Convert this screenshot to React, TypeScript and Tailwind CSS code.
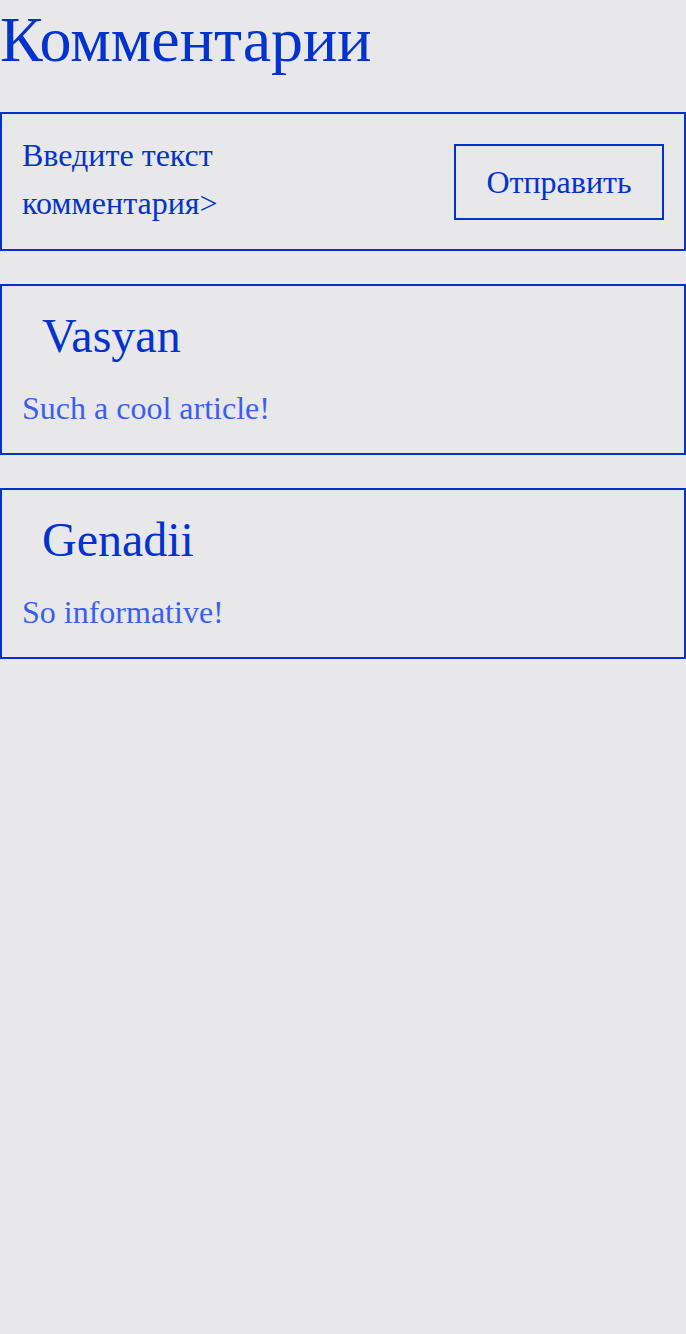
import React from "react";

const comments = [
  { name: "Vasyan", text: "Such a cool article!" },
  { name: "Genadii", text: "So informative!" },
];

export default function App() {
  return (
    <div className="min-h-[1334px] w-full bg-[#e8e8ea] text-[#0033cc]" style={{ fontFamily: '"Liberation Serif", "Times New Roman", serif' }}>
      <h1 className="m-0 text-[64px] leading-[80px] font-normal">Комментарии</h1>
      <div className="mt-[32px] h-[139px] flex items-center justify-between border-2 border-[#0033cc] px-[20px]">
        <div className="mb-[6px] text-[32px] leading-[48px] w-[280px]">Введите текст комментария&gt;</div>
        <button className="w-[210px] h-[76px] border-2 border-[#0033cc] text-[32px] text-[#0033cc]">Отправить</button>
      </div>
      {comments.map((c) => (
        <div key={c.name} className="mt-[33px] border-2 border-[#0033cc] h-[171px] pl-[20px] pt-[20px]">
          <div className="pl-[20px] text-[48px] leading-[60px]">{c.name}</div>
          <div className="mt-[22px] text-[32px] leading-[40px] text-[#3a5ff0]">{c.text}</div>
        </div>
      ))}
    </div>
  );
}
